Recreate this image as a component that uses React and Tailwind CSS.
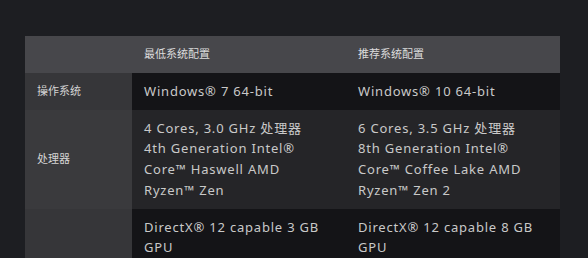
const rows = [
  {
    label: "操作系统",
    min: ["Windows® 7 64-bit"],
    rec: ["Windows® 10 64-bit"],
  },
  {
    label: "处理器",
    min: [
      "4 Cores, 3.0 GHz 处理器",
      "4th Generation Intel®",
      "Core™ Haswell AMD",
      "Ryzen™ Zen",
    ],
    rec: [
      "6 Cores, 3.5 GHz 处理器",
      "8th Generation Intel®",
      "Core™ Coffee Lake AMD",
      "Ryzen™ Zen 2",
    ],
  },
  {
    label: "显卡",
    min: ["DirectX® 12 capable 3 GB", "GPU"],
    rec: ["DirectX® 12 capable 8 GB", "GPU"],
    tall: true,
  },
];

function Lines({ lines }) {
  return lines.map((line, i) => <div key={i}>{line}</div>);
}

export default function App() {
  return (
    <div
      className="h-[258px] w-[588px] overflow-hidden bg-[#1d1e22] pt-9 pl-[25px]"
      style={{ fontFamily: '"Noto Sans", "Noto Sans CJK SC", sans-serif' }}
    >
      <div className="w-[535px]">
        <div className="grid h-[37px] grid-cols-[107px_214px_214px] items-center bg-[#47474b] text-[11px] text-[#dcdcdc]">
          <div />
          <div className="px-3">最低系统配置</div>
          <div className="px-3">推荐系统配置</div>
        </div>
        {rows.map((row, i) => (
          <div
            key={row.label}
            className={`grid grid-cols-[107px_214px_214px] ${
              row.tall ? "min-h-[190px]" : ""
            }`}
          >
            <div
              className={`flex items-center px-3 text-[11px] text-[#d4d4d4] ${
                i % 2 ? "bg-[#3a3a3d]" : "bg-[#363639]"
              }`}
            >
              {row.label}
            </div>
            <div
              className={`px-3 py-2 text-[13px] leading-[20.7px] tracking-[0.8px] text-[#c9c9c9] ${
                i % 2 ? "bg-[#252528]" : "bg-[#141417]"
              }`}
            >
              <Lines lines={row.min} />
            </div>
            <div
              className={`px-3 py-2 text-[13px] leading-[20.7px] tracking-[0.8px] text-[#c9c9c9] ${
                i % 2 ? "bg-[#252528]" : "bg-[#141417]"
              }`}
            >
              <Lines lines={row.rec} />
            </div>
          </div>
        ))}
      </div>
    </div>
  );
}
